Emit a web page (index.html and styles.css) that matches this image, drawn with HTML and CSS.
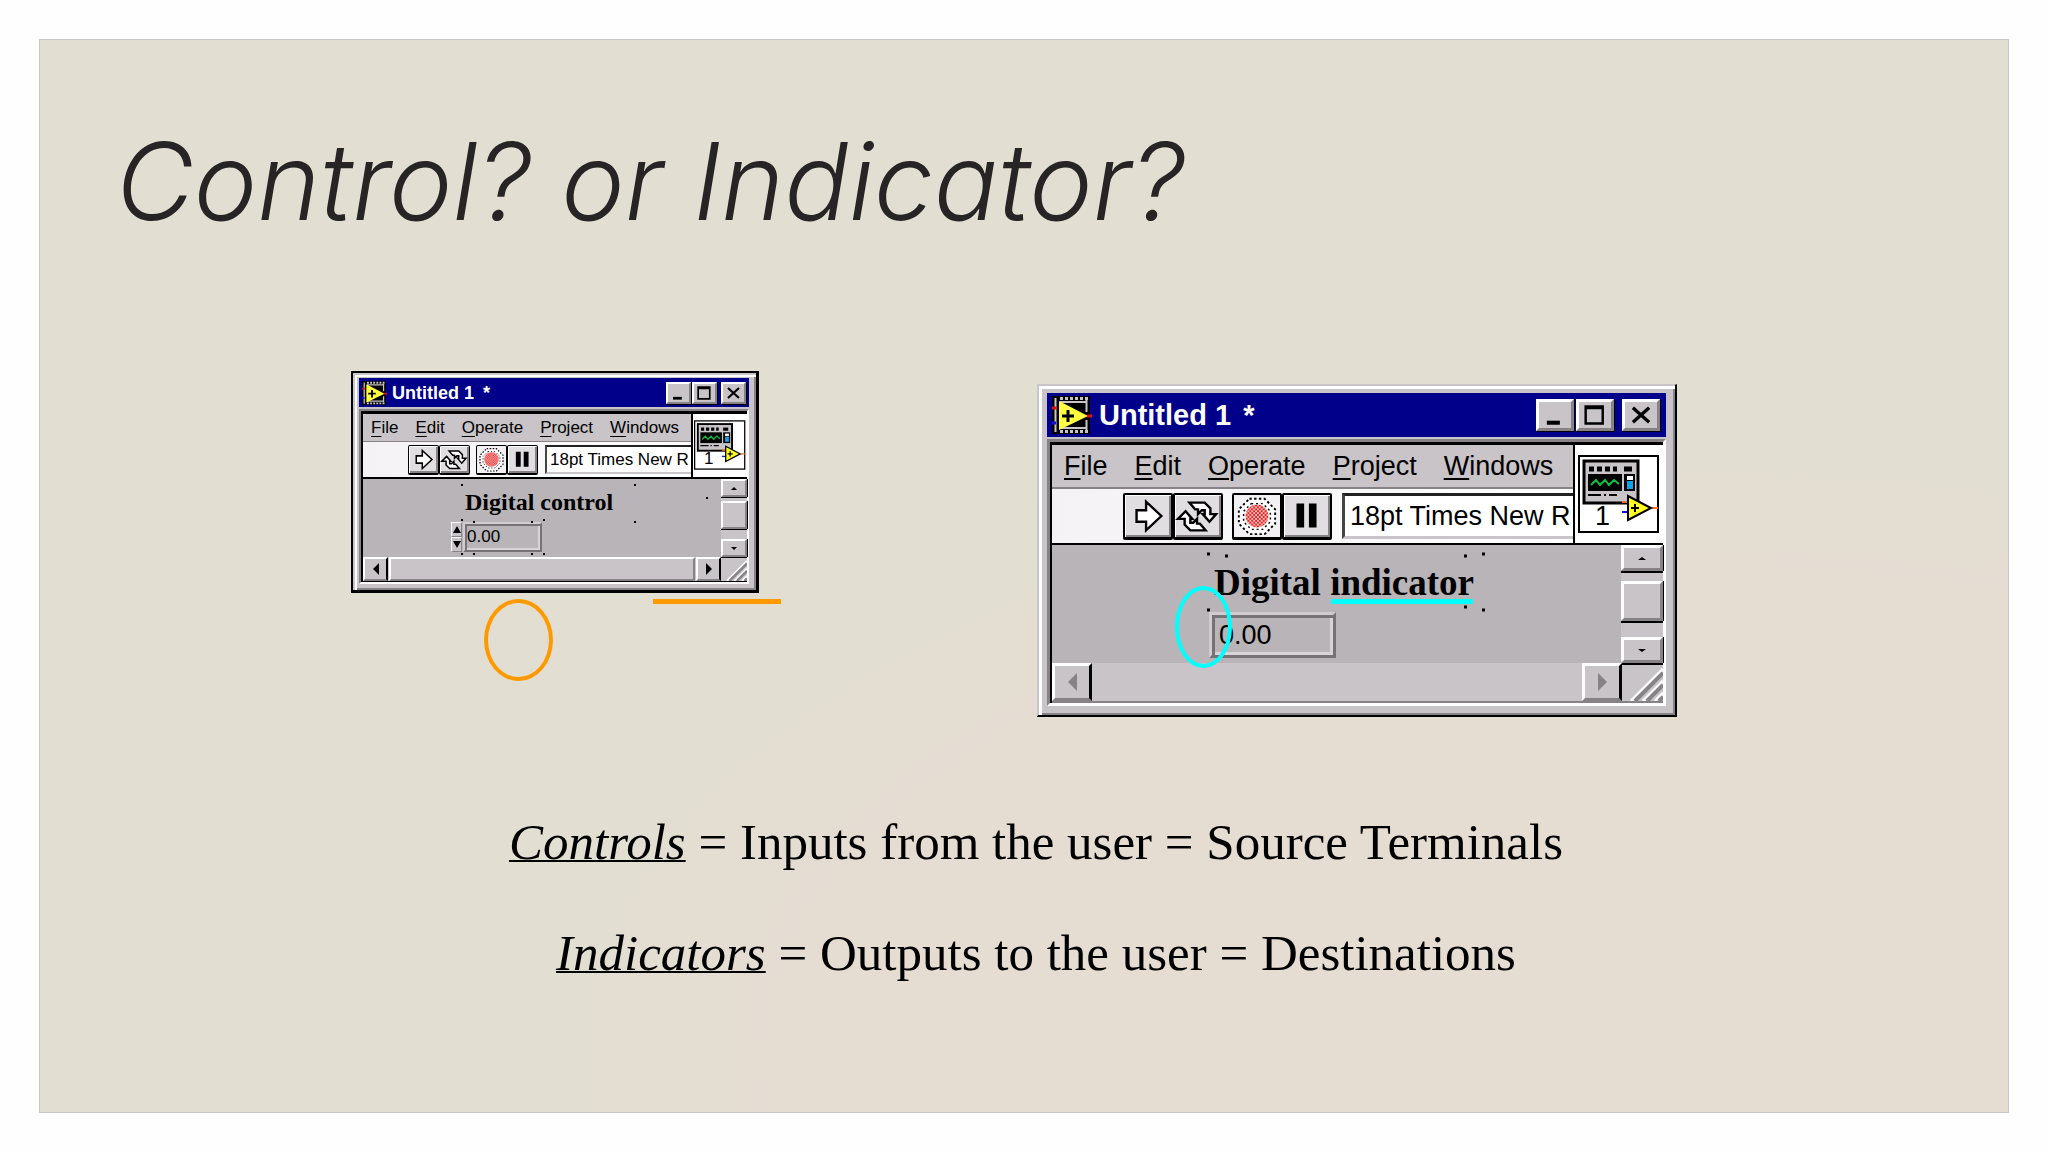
FILE: index.html
```
<!DOCTYPE html>
<html lang="en">
<head>
    <meta charset="UTF-8">
    <meta name="viewport" content="width=device-width, initial-scale=1.0">
    <title>Control? or Indicator?</title>
    <link rel="stylesheet" href="styles.css">
</head>
<body>
    <!-- shared drawings -->
    <svg class="sprites" aria-hidden="true">
        <symbol id="vi-logo" viewBox="0 0 40 38">
            <rect width="38" height="38" fill="#000"/>
            <path d="M8 2.500H36M8 35.500H36" stroke="#c8c4c8" stroke-width="3" stroke-dasharray="3 2"/>
            <path d="M3.500 2V36M34.500 4V16M34.500 24V34M8 6H34M8 32H34" stroke="#c8c4c8" stroke-width="2"/>
            <path d="M7 5V34L36 20Z" fill="#ffff40"/>
            <path d="M16 14V26M10 20H22" stroke="#000" stroke-width="3"/>
            <path d="M0 12H5M35 20H40" stroke="#e01010" stroke-width="3"/>
            <path d="M0 27H4" stroke="#1010e0" stroke-width="3"/>
        </symbol>
        <symbol id="run" viewBox="0 0 48 44">
            <path d="M12 16H22V7L38 22L22 37V28H12Z" fill="#fff" stroke="#000" stroke-width="2.500"/>
        </symbol>
        <symbol id="run-loop" viewBox="0 0 48 44">
            <path d="M15 8H31L37 14V20H43L36 28L29 20H31V16H28L24 20V15H21Z" fill="#fff" stroke="#000" stroke-width="2.500"/>
            <path d="M32 37H16L10 31V25H3L11 17L18 25H16V29H19L23 25V30H26Z" fill="#fff" stroke="#000" stroke-width="2.500"/>
        </symbol>
        <symbol id="abort" viewBox="0 0 48 44">
            <path d="M16 4H32L43 15V30L32 41H16L5 30V15Z" fill="#fff" stroke="#000" stroke-width="2" stroke-dasharray="2.500 2.500"/>
            <path d="M18 9H30L38 17V28L30 36H18L10 28V17Z" fill="none" stroke="#000" stroke-width="1.500" stroke-dasharray="2 3"/>
            <circle cx="24" cy="22" r="12" fill="url(#red-check)"/>
        </symbol>
        <pattern id="red-check" width="4" height="4" patternUnits="userSpaceOnUse">
            <rect width="4" height="4" fill="#f6c0c0"/>
            <rect width="2" height="2" fill="#ee2020"/>
            <rect x="2" y="2" width="2" height="2" fill="#ee2020"/>
        </pattern>
        <symbol id="pause" viewBox="0 0 48 44">
            <path d="M13 9H21V34H13ZM26 9H34V34H26Z"/>
        </symbol>
        <symbol id="minimize" viewBox="0 0 38 32">
            <path d="M9 23H25V28H9Z"/>
        </symbol>
        <symbol id="maximize" viewBox="0 0 38 32">
            <path d="M6 4H30V28H6ZM9 9V25H27V9Z" fill-rule="evenodd"/>
        </symbol>
        <symbol id="close" viewBox="0 0 38 32">
            <path d="M9 7L29 25M29 7L9 25" stroke="#000" stroke-width="4"/>
        </symbol>
        <symbol id="panel" viewBox="0 0 82 78">
            <rect x="1" y="1" width="79" height="76" fill="#fff" stroke="#000" stroke-width="2"/>
            <rect x="6" y="6" width="54" height="42" fill="#c8c4c8" stroke="#000" stroke-width="3"/>
            <path d="M11 14H39" stroke="#000" stroke-width="5" stroke-dasharray="5 3"/>
            <path d="M46 14H54" stroke="#000" stroke-width="5"/>
            <rect x="10" y="19" width="34" height="17"/>
            <path d="M13 30L18 25L22 30L27 25L31 30L36 25L41 29" fill="none" stroke="#10c040" stroke-width="2"/>
            <rect x="46" y="19" width="11" height="17"/>
            <rect x="49" y="21" width="6" height="4" fill="#fff"/>
            <rect x="49" y="26" width="6" height="8" fill="#10a0f0"/>
            <path d="M10 40H23M26 40H28M31 40H39" stroke="#000" stroke-width="2"/>
            <path d="M44 47H50M74 53H80" stroke="#ff6a30" stroke-width="2"/>
            <path d="M44 57H50" stroke="#1010e0" stroke-width="2"/>
            <path d="M50 41V65L73 53Z" fill="#ffff20" stroke="#000" stroke-width="2"/>
            <path d="M57 49V57M53 53H61" stroke="#000" stroke-width="2"/>
        </symbol>
        <symbol id="grip" viewBox="0 0 40 38">
            <path d="M8 38L40 6M20 38L40 18M32 38L40 30" stroke="#fff" stroke-width="3"/>
            <path d="M12 38L40 10M24 38L40 22M36 38L40 34" stroke="#878387" stroke-width="4"/>
        </symbol>
    </svg>

    <main class="slide">
        <h1>Control? or Indicator?</h1>

        <div class="figures">
            <section class="figure small">
                <div class="window">
                    <header class="title-bar">
                        <svg class="logo"><use href="#vi-logo"/></svg>
                        <h2>Untitled 1 <span class="dirty">*</span></h2>
                        <button aria-label="Minimize"><svg><use href="#minimize"/></svg></button>
                        <button aria-label="Maximize"><svg><use href="#maximize"/></svg></button>
                        <button class="close" aria-label="Close"><svg><use href="#close"/></svg></button>
                    </header>
                    <div class="client">
                        <div class="top">
                            <div class="bars">
                                <nav class="menu">
                                    <a href="#"><u>F</u>ile</a>
                                    <a href="#"><u>E</u>dit</a>
                                    <a href="#"><u>O</u>perate</a>
                                    <a href="#"><u>P</u>roject</a>
                                    <a href="#"><u>W</u>indows</a>
                                </nav>
                                <div class="toolbar">
                                    <button aria-label="Run"><svg><use href="#run"/></svg></button>
                                    <button aria-label="Run continuously"><svg><use href="#run-loop"/></svg></button>
                                    <button class="abort" aria-label="Abort"><svg><use href="#abort"/></svg></button>
                                    <button aria-label="Pause"><svg><use href="#pause"/></svg></button>
                                    <input class="font-box" type="text" value="18pt Times New R" aria-label="Font">
                                </div>
                            </div>
                            <div class="vi-icon">
                                <svg><use href="#panel"/></svg>
                                <span>1</span>
                            </div>
                        </div>
                        <div class="middle">
                            <div class="panel">
                                <svg class="marks" aria-hidden="true">
                                    <path d="M98 6h2M271 6h2M343 19h2M98 41h2M110 43h2M168 43h2M180 41h2M271 43h2M98 75h2M110 75h2M168 75h2M180 75h2"/>
                                </svg>
                                <label for="control">Digital control</label>
                                <div class="numeric">
                                    <div class="spin">
                                        <button aria-label="Increment"><i class="up"></i></button>
                                        <button aria-label="Decrement"><i class="down"></i></button>
                                    </div>
                                    <input id="control" type="text" value="0.00">
                                </div>
                            </div>
                            <div class="v-scroll">
                                <button aria-label="Scroll up"><i class="up"></i></button>
                                <div class="thumb"></div>
                                <button aria-label="Scroll down"><i class="down"></i></button>
                            </div>
                        </div>
                        <div class="h-scroll">
                            <button aria-label="Scroll left"><i class="left"></i></button>
                            <div class="thumb"></div>
                            <button aria-label="Scroll right"><i class="right"></i></button>
                            <svg class="grip"><use href="#grip"/></svg>
                        </div>
                    </div>
                </div>
                <div class="ring"></div>
                <div class="line"></div>
            </section>

            <section class="figure large">
                <div class="window">
                    <header class="title-bar">
                        <svg class="logo"><use href="#vi-logo"/></svg>
                        <h2>Untitled 1 <span class="dirty">*</span></h2>
                        <button aria-label="Minimize"><svg><use href="#minimize"/></svg></button>
                        <button aria-label="Maximize"><svg><use href="#maximize"/></svg></button>
                        <button class="close" aria-label="Close"><svg><use href="#close"/></svg></button>
                    </header>
                    <div class="client">
                        <div class="top">
                            <div class="bars">
                                <nav class="menu">
                                    <a href="#"><u>F</u>ile</a>
                                    <a href="#"><u>E</u>dit</a>
                                    <a href="#"><u>O</u>perate</a>
                                    <a href="#"><u>P</u>roject</a>
                                    <a href="#"><u>W</u>indows</a>
                                </nav>
                                <div class="toolbar">
                                    <button aria-label="Run"><svg><use href="#run"/></svg></button>
                                    <button aria-label="Run continuously"><svg><use href="#run-loop"/></svg></button>
                                    <button class="abort" aria-label="Abort"><svg><use href="#abort"/></svg></button>
                                    <button aria-label="Pause"><svg><use href="#pause"/></svg></button>
                                    <input class="font-box" type="text" value="18pt Times New R" aria-label="Font">
                                </div>
                            </div>
                            <div class="vi-icon">
                                <svg><use href="#panel"/></svg>
                                <span>1</span>
                            </div>
                        </div>
                        <div class="middle">
                            <div class="panel">
                                <svg class="marks" aria-hidden="true">
                                    <path d="M155 9h3M173 11h3M412 11h3M430 9h3M155 65h3M412 62h3M430 65h3"/>
                                </svg>
                                <label for="indicator">Digital indicator</label>
                                <div class="numeric">
                                    <input id="indicator" type="text" value="0.00" readonly>
                                </div>
                            </div>
                            <div class="v-scroll">
                                <button aria-label="Scroll up"><i class="up"></i></button>
                                <div class="thumb"></div>
                                <button aria-label="Scroll down"><i class="down"></i></button>
                            </div>
                        </div>
                        <div class="h-scroll">
                            <button aria-label="Scroll left"><i class="left"></i></button>
                            <div class="track"></div>
                            <button aria-label="Scroll right"><i class="right"></i></button>
                            <svg class="grip"><use href="#grip"/></svg>
                        </div>
                    </div>
                </div>
                <div class="ring"></div>
                <div class="line"></div>
            </section>
        </div>

        <div class="summary">
            <p><em>Controls</em> = Inputs from the user = Source Terminals</p>
            <p><em>Indicators</em> = Outputs to the user = Destinations</p>
        </div>
    </main>
</body>
</html>
```
FILE: styles.css
```
* {
    box-sizing: border-box;
}
body {
    margin: 0;
    padding: 39px;
    min-height: 100vh;
    display: flex;
    background-color: #fefefe;
    color: #000;
}
.sprites {
    position: absolute;
    width: 0;
    height: 0;
}
.slide {
    flex: 1;
    border: 1px solid #c8c8c6;
    background: radial-gradient(65% 62% at 85% 95%, #e5dcd2 70%, #e2dfd2);
}
h1 {
    margin: 76px 0 0 76px;
    font-family: Inter, Lato, sans-serif;
    font-feature-settings: "cv11";
    font-size: 107px;
    line-height: 130px;
    font-weight: 300;
    font-style: italic;
    color: #262424;
}
.figures {
    display: flex;
    justify-content: center;
    align-items: flex-start;
    gap: 278px;
    padding-right: 20px;
    margin-top: 125px;
}
.figure {
    position: relative;
    font-family: "Liberation Sans", Arial, sans-serif;
}
.small {
    --text: 17px;
    --title: 18px;
    --caption: 24px;
    --edge: 2px;
    --tool: 31px;
    --scroll: 25px;
    width: 408px;
}
.large {
    --text: 27px;
    --title: 29px;
    --caption: 37px;
    --edge: 3px;
    --tool: 50px;
    --scroll: 40px;
    width: 640px;
    margin-top: 13px;
}
button {
    display: flex;
    align-items: center;
    justify-content: center;
    padding: 0;
    flex: none;
    border: var(--edge) solid;
    border-color: #fff #868286 #868286 #fff;
    background-color: #c8c4c8;
}
button svg {
    width: 100%;
    height: 100%;
}
input {
    font: inherit;
    color: #000;
    border-radius: 0;
    min-width: 0;
}

/* window frame */
.window {
    border: 2px solid #000;
    border-width: 2px 3px 3px 2px;
    padding: 5px 7px 6px 6px;
    background-color: #c8c4c8;
    box-shadow: inset 2px 2px 0 #c8c4c8, inset 4px 4px 0 #fff, inset -2px -2px 0 #868286;
}
.large .window {
    border-width: 1px 2px 2px 1px;
    border-color: #c8c4c8 #000 #000 #c8c4c8;
    box-shadow: inset 1px 1px 0 #c8c4c8, inset 4px 4px 0 #fff, inset -2px -2px 0 #868286;
    padding: 8px 9px 9px 9px;
}
.title-bar {
    display: flex;
    align-items: center;
    height: 29px;
    padding: 0 3px;
    background-color: #00008a;
}
.large .title-bar {
    height: 44px;
    padding: 0 6px 0 5px;
}
.title-bar h2 {
    flex: 1;
    margin: 0 0 0 5px;
    color: #fff;
    font-size: var(--title);
    line-height: 28px;
}
.large h2 {
    margin-left: 7px;
}
.dirty {
    margin-left: 4px;
}
.logo {
    width: 25px;
    height: 24px;
}
.large .logo {
    width: 40px;
    height: 38px;
}
.title-bar button {
    width: 25px;
    height: 22px;
    box-shadow: 1px 1px 0 #000;
    margin-left: 1px;
}
.large .title-bar button {
    width: 38px;
    height: 32px;
    margin-left: 2px;
}
.title-bar .close {
    margin-left: 4px;
}
.large .title-bar .close {
    margin-left: 8px;
}
.client {
    margin-top: 2px;
    border: var(--edge) solid;
    border-color: #868286 #fff #fff #868286;
    box-shadow: inset 2px 2px 0 #000;
    padding: 1px 0 0 1px;
}

/* menu, toolbar and icon pane */
.top {
    display: flex;
    margin-left: 1px;
    border-top: 2px solid #000;
    border-bottom: 2px solid #000;
    background-color: #fff;
}
.bars {
    flex: 1;
    min-width: 0;
    border-right: 2px solid #000;
}
.menu {
    display: flex;
    align-items: center;
    gap: 17px;
    height: 28px;
    padding-left: 8px;
    background-color: #c8c4c8;
    border-bottom: 1px solid #868286;
    font-size: var(--text);
}
.large .menu {
    height: 44px;
    gap: 27px;
    padding-left: 12px;
    border-bottom-width: 2px;
}
.menu a {
    color: #000;
    text-decoration: none;
}
.menu u {
    text-underline-offset: 3px;
}
.toolbar {
    display: flex;
    align-items: center;
    height: 35px;
    padding-left: 45px;
    background: linear-gradient(90deg, #f4f2f4, #fff);
}
.large .toolbar {
    height: 54px;
    padding-left: 71px;
}
.toolbar button {
    width: var(--tool);
    height: 30px;
    border-color: #000;
    border-width: 1px 1px 2px;
    border-radius: 2px;
    background-color: #e0dee0;
    box-shadow: inset 1px 1px 0 #fff, inset -2px -2px 0 #868286;
}
.large .toolbar button {
    height: 47px;
    border-width: 2px 2px 3px;
}
.toolbar .abort {
    margin-left: 6px;
    background-color: #f2f0f2;
    box-shadow: none;
}
.large .toolbar .abort {
    margin-left: 9px;
}
.font-box {
    flex: 1;
    height: 29px;
    margin-left: 7px;
    padding: 0 0 0 3px;
    border: var(--edge) solid;
    border-color: #222 transparent #c8c4c8 #444;
    border-right: 0;
    background-color: #fff;
    font-size: var(--text);
}
.large .font-box {
    height: 46px;
    margin-left: 10px;
    padding-left: 5px;
}
.vi-icon {
    position: relative;
    width: 54px;
    padding: 6px 1px;
    font-size: var(--text);
}
.large .vi-icon {
    width: 88px;
    padding: 10px 3px;
}
.vi-icon svg {
    display: block;
    width: 52px;
    height: 50px;
}
.large .vi-icon svg {
    width: 82px;
    height: 78px;
}
.vi-icon span {
    position: absolute;
    left: 11px;
    bottom: 8px;
}
.large .vi-icon span {
    left: 20px;
    bottom: 11px;
}

/* front panel */
.middle {
    display: flex;
    height: 78px;
    margin-left: 1px;
}
.large .middle {
    height: 118px;
}
.panel {
    position: relative;
    flex: 1;
    padding: 9px 0 0 102px;
    background-color: #b8b4b8;
}
.large .panel {
    padding: 17px 0 0 162px;
}
.marks {
    position: absolute;
    inset: 0;
    width: 100%;
    height: 100%;
    pointer-events: none;
    stroke: #000;
    stroke-width: 2px;
}
.large .marks {
    stroke-width: 3px;
}
.panel label {
    display: block;
    font-family: "Liberation Serif", "Times New Roman", serif;
    font-size: var(--caption);
    font-weight: bold;
    line-height: 28px;
}
.large .panel label {
    line-height: 42px;
}
.numeric {
    display: flex;
    gap: 1px;
    margin: 6px 0 0 -14px;
}
.large .numeric {
    margin: 8px 0 0 -5px;
}
.numeric input {
    width: 79px;
    height: 30px;
    padding: 0 2px;
    border: var(--edge) solid;
    border-color: #d0ccd0 #767276 #767276 #d0ccd0;
    box-shadow: inset 2px 2px 0 #767276, inset -2px -2px 0 #d8d4d8;
    background-color: #b8b4b8;
    font-size: var(--text);
}
.large .numeric input {
    width: 127px;
    height: 46px;
    padding: 0 7px;
    box-shadow: inset 3px 3px 0 #767276, inset -3px -3px 0 #d8d4d8;
}
.spin button {
    width: 11px;
    height: 15px;
    border-width: 1px;
}
.v-scroll {
    display: flex;
    flex-direction: column;
    justify-content: space-between;
    width: 26px;
    background-color: #c8c4c8;
}
.large .v-scroll {
    width: 42px;
}
.v-scroll button {
    height: 18px;
    box-shadow: 0 1px 0 #000, 1px 0 0 #000;
}
.large .v-scroll button {
    height: 26px;
    box-shadow: 0 2px 0 #000, 1px 0 0 #000;
}
.thumb {
    border: var(--edge) solid;
    border-color: #fff #868286 #868286 #fff;
    background-color: #c8c4c8;
}
.v-scroll .thumb {
    height: 28px;
    margin-bottom: 7px;
    box-shadow: 0 1px 0 #000, 1px 0 0 #000;
}
.large .v-scroll .thumb {
    height: 40px;
    box-shadow: 0 2px 0 #000, 1px 0 0 #000;
}
.h-scroll {
    display: flex;
    gap: 1px;
    height: var(--scroll);
    margin-left: 1px;
    border-bottom: 1px solid #000;
}
.h-scroll button {
    width: var(--scroll);
    border-right-color: #000;
}
.h-scroll .thumb,
.track {
    flex: 1;
}
.grip {
    width: var(--scroll);
    height: 100%;
}
.large .h-scroll {
    border-bottom: 2px solid #868286;
}

/* arrows */
i {
    width: 0;
    height: 0;
    border: 3px solid transparent;
}
.up {
    border-top: 0;
    border-bottom-color: #000;
}
.down {
    border-bottom: 0;
    border-top-color: #000;
}
.left {
    border-width: 6px;
    border-left: 0;
    border-right-color: #000;
}
.right {
    border-width: 6px;
    border-right: 0;
    border-left-color: #000;
}
.spin .up {
    border-width: 0 4px 7px;
}
.spin .down {
    border-width: 7px 4px 0;
}
.large .up,
.large .down {
    border-left-width: 4px;
    border-right-width: 4px;
}
.large .left {
    border: 9px solid transparent;
    border-left: 0;
    border-right-color: #868286;
}
.large .right {
    border: 9px solid transparent;
    border-right: 0;
    border-left-color: #868286;
}

/* marks over the windows */
.ring,
.line {
    position: absolute;
}
.ring {
    border: 4px solid #ff9900;
    border-radius: 50%;
}
.line {
    height: 5px;
    background-color: #ff9900;
}
.small .ring {
    left: 133px;
    top: 228px;
    width: 69px;
    height: 82px;
}
.small .line {
    left: 302px;
    top: 228px;
    width: 128px;
}
.large .ring {
    left: 138px;
    top: 202px;
    width: 57px;
    height: 82px;
    border-color: #00ffff;
}
.large .line {
    left: 294px;
    top: 215px;
    width: 142px;
    background-color: #00ffff;
}

.summary {
    margin: 95px 0 0 24px;
    text-align: center;
    font-family: "Liberation Serif", "Times New Roman", serif;
    font-size: 51px;
    line-height: 60px;
}
.summary p {
    margin: 0 0 51px;
}
.summary em {
    text-decoration: underline;
    text-decoration-thickness: 2px;
}
```
